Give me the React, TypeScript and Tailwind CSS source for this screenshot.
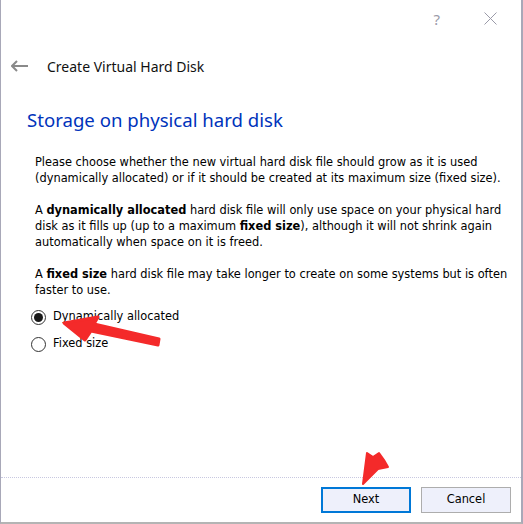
import React, { useState } from 'react';

const body = { fontFamily: '"DejaVu Sans", Verdana, sans-serif' };
const ui = { fontFamily: '"Noto Sans", "Open Sans", sans-serif' };

const Radio = ({ checked, label, onClick }: { checked: boolean; label: string; onClick: () => void }) => (
    <button onClick={onClick} className="flex items-center h-[20px] text-left">
        <span className="w-[15px] h-[15px] rounded-full border border-[#333] bg-white flex items-center justify-center">
            {checked && <span className="w-[9px] h-[9px] rounded-full bg-[#1a1a1a]" />}
        </span>
        <span className="ml-[7px] text-[11.4px] text-black">{label}</span>
    </button>
);

export default function App() {
    const [mode, setMode] = useState<'dynamic' | 'fixed'>('dynamic');

    return (
        <div className="relative w-[523px] h-[524px] bg-white border-l border-r-2 border-b-2 border-l-[#a8a8b8] border-r-[#a8a8b8] border-b-[#b4b4b4] flex flex-col overflow-hidden" style={body}>
            <div className="h-[40px] flex items-start justify-end pr-[24px] pt-[10px] gap-[44px] text-[#9a9aa8]" style={ui}>
                <span className="text-[15px] leading-none mt-[2px]">?</span>
                <svg width="13" height="13" viewBox="0 0 13 13" className="mt-[2px]">
                    <path d="M0.5 0.5 L12.5 12.5 M12.5 0.5 L0.5 12.5" stroke="#9a9aa8" strokeWidth="1" fill="none" />
                </svg>
            </div>

            <div className="flex items-center h-[32px] mt-[10px] pl-[10px]" style={ui}>
                <svg width="18" height="12" viewBox="0 0 18 12">
                    <path d="M1 6 H17 M6 1 L1 6 L6 11" stroke="#8a8a8a" strokeWidth="2" fill="none" />
                </svg>
                <span className="ml-[18px] text-[14px] text-[#111]">Create Virtual Hard Disk</span>
            </div>

            <div className="mt-[25px] pl-[26px] text-[18.6px] leading-[26px] text-[#0033bb]" style={ui}>
                Storage on physical hard disk
            </div>

            <div className="mt-[21px] pl-[34px] text-[11.4px] leading-[16px] text-black whitespace-nowrap">
                <p>
                    Please choose whether the new virtual hard disk file should grow as it is used<br />
                    (dynamically allocated) or if it should be created at its maximum size (fixed size).
                </p>
                <p className="mt-[16px]">
                    A <b>dynamically allocated</b> hard disk file will only use space on your physical hard<br />
                    disk as it fills up (up to a maximum <b>fixed size</b>), although it will not shrink again<br />
                    automatically when space on it is freed.
                </p>
                <p className="mt-[16px]">
                    A <b>fixed size</b> hard disk file may take longer to create on some systems but is often<br />
                    faster to use.
                </p>
            </div>

            <div className="mt-[9px] pl-[30px] flex flex-col gap-[7px]">
                <Radio checked={mode === 'dynamic'} label="Dynamically allocated" onClick={() => setMode('dynamic')} />
                <Radio checked={mode === 'fixed'} label="Fixed size" onClick={() => setMode('fixed')} />
            </div>

            <div className="mt-auto h-[45px] border-t border-dotted border-t-[#c8c8e0] flex items-start justify-end gap-[10px] pr-[10px] pt-[9px]">
                <button className="w-[90px] h-[26px] border-2 border-[#0078d7] bg-[#eef0fb] text-[11.4px] text-black">Next</button>
                <button className="w-[90px] h-[26px] border border-[#adadad] bg-[#eef0fb] text-[11.4px] text-black">Cancel</button>
            </div>

            {/* red annotation arrows */}
            <svg className="absolute left-0 top-0 pointer-events-none" width="523" height="524">
                <path d="M157 345 L90 331 L84 340 L63 323 L97 317 L93 324 L158 339 Z" fill="#f42a2a" stroke="#f42a2a" strokeWidth="3" strokeLinejoin="round" />
                <path d="M362 484 L366 453 L372 457 L378 453 L383 460 L387 467 L377 469 Z" fill="#f42a2a" stroke="#f42a2a" strokeWidth="2" strokeLinejoin="round" />
            </svg>
        </div>
    );
}
